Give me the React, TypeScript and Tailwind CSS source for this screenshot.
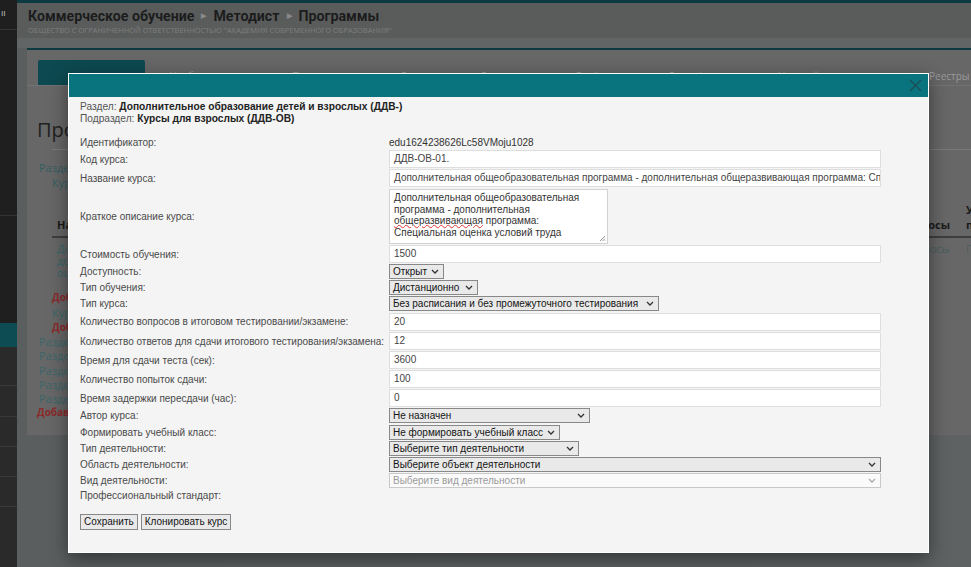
import React from "react";

function Chevron({ className = "" }: { className?: string }) {
  return (
    <svg width="8" height="5" viewBox="0 0 8 5" className={className}>
      <path d="M1 1l3 3 3-3" fill="none" stroke="currentColor" strokeWidth="1.3" />
    </svg>
  );
}

function Field({ value }: { value: string }) {
  return (
    <div className="h-[18px] w-[492px] overflow-hidden whitespace-nowrap border border-[#dedede] bg-white pl-[4px] text-[10px] leading-[16px] text-[#444]">
      {value}
    </div>
  );
}

function Select({ value, className, disabled }: { value: string; className: string; disabled?: boolean }) {
  return (
    <div
      className={`flex h-[15px] items-center justify-between border pl-[3px] pr-[4px] text-[10px] leading-none whitespace-nowrap ${
        disabled ? "border-[#c9c9c9] bg-[#fafafa] text-[#9b9b9b]" : "border-[#888] bg-[#e9e9e9] text-[#141414]"
      } ${className}`}
    >
      <span>{value}</span>
      <Chevron className={disabled ? "text-[#aaa]" : "text-[#333]"} />
    </div>
  );
}

function Label({ children }: { children: React.ReactNode }) {
  return <div className="text-[10px] leading-[13px] text-[#4a4a4a] whitespace-nowrap">{children}</div>;
}

function Btn({ children }: { children: React.ReactNode }) {
  return (
    <div className="flex h-[16px] items-center border border-[#888] bg-[#e9e9e9] px-[3px] text-[10px] leading-none text-[#141414]">
      {children}
    </div>
  );
}

function Background() {
  const tabs = [
    { t: "Учебные группы", w: "w-[122px]" },
    { t: "Программы", w: "w-[108px]" },
    { t: "Слушатели", w: "w-[80px]" },
    { t: "Документы", w: "w-[95px]" },
    { t: "Отчёты", w: "w-[93px]" },
    { t: "Сертификаты", w: "w-[110px]" },
    { t: "Настройки", w: "w-[151px]" },
  ];
  return (
    <div className="flex h-full">
      {/* sidebar */}
      <aside className="flex w-[17px] shrink-0 flex-col bg-[#1f1f1f]">
        <div className="h-[30px] border-b border-[#333] pl-[1px] pt-[8px] text-[9px] leading-none text-[#bbb]">ıı</div>
        <div className="h-[186px] border-b border-[#333]" />
        <div className="h-[107px]" />
        <div className="h-[24px] bg-[#0d4c53]" />
        <div className="h-[39px] border-b border-[#3a3a3a] bg-[#2a2a2a]" />
        <div className="h-[31px] border-b border-[#3a3a3a] bg-[#2a2a2a]" />
        <div className="h-[30px] border-b border-[#3a3a3a] bg-[#2a2a2a]" />
        <div className="h-[30px] border-b border-[#3a3a3a] bg-[#2a2a2a]" />
        <div className="h-[30px] border-b border-[#3a3a3a] bg-[#2a2a2a]" />
        <div className="flex-1 bg-[#2a2a2a]" />
      </aside>

      <main className="flex flex-1 flex-col bg-[#5a5e5e] font-['Open_Sans',Arial,sans-serif]">
        <div className="h-[3px] bg-[#0c3a40]" />
        <header className="h-[35px] bg-[#5a5c5c] pl-[11px] pt-[4px]">
          <div className="flex items-center gap-[7px] font-['Roboto',Arial,sans-serif] text-[14.2px] font-bold leading-[18px] text-[#1c1c1c]">
            <span>Коммерческое обучение</span>
            <span className="text-[7px] text-[#8a8a8a]">▶</span>
            <span>Методист</span>
            <span className="text-[7px] text-[#8a8a8a]">▶</span>
            <span>Программы</span>
          </div>
          <div className="mt-[2px] text-[7.5px] uppercase leading-none text-[#7c7e7e]">
            Общество с ограниченной ответственностью "Академия современного образования"
          </div>
        </header>
        <div className="h-[10px] bg-[#626565]" />

        <div className="pl-[10px]">
          <section className="flex h-[387px] flex-col border-t-2 border-[#0c3a40] bg-[#676767]">
            {/* tabs */}
            <div className="mt-[10px] flex h-[26px] items-end border-b border-[#727272]">
              <div className="ml-[11px] h-[25px] w-[107px] rounded-t-[2px] bg-[#0d4950]" />
              <div className="ml-[25px] flex self-center pt-[7px] text-[10px] text-[#9a9a9a]">
                {tabs.map((x) => (
                  <span key={x.t} className={`${x.w} shrink-0`}>
                    {x.t}
                  </span>
                ))}
                <span className="shrink-0">Реестры</span>
              </div>
            </div>

            <div className="ml-[10px] mt-[33px] text-[20px] leading-[22px] text-[#1f1f1f]">Программы</div>
            <div className="ml-[25px] mt-[8px] border-b border-[#7a7a7a]" />
            <div className="ml-[12px] mt-[10px] text-[11px] leading-[15px] text-[#335f63]">Раздел: Дополнительное образование</div>
            <div className="ml-[25px] text-[11px] leading-[15px] text-[#335f63]">Курсы для взрослых</div>

            {/* table */}
            <div className="ml-[25px] mt-[12px]">
              <div className="flex items-end border-b-2 border-[#3e3e3e] pb-[4px] text-[11px] font-bold leading-[15px] text-[#1a1a1a]">
                <div className="flex-1 pl-[5px]">Наименование</div>
                <div className="shrink-0">Вопросы</div>
                <div className="w-[21px] shrink-0 overflow-visible whitespace-nowrap pl-[16px]">
                  <div>Уровень</div>
                  <div>подготовки</div>
                </div>
              </div>
              <div className="flex pt-[5px] text-[11px] leading-[12px] text-[#3a6669]">
                <div className="flex-1 pl-[5px]">
                  <div>Дополнительная</div>
                  <div>дополнительная</div>
                  <div>оценка условий</div>
                </div>
                <div className="shrink-0 text-[#4a5e5e]">Вопросы</div>
                <div className="w-[21px] shrink-0 whitespace-nowrap pl-[16px] text-[#4a5e5e]">Просмотр</div>
              </div>
            </div>
            <div className="ml-[25px] mt-[11px] text-[10px] font-bold leading-[15px] text-[#8b2a2a]">Добавить программу</div>
            <div className="ml-[25px] text-[11px] leading-[15px] text-[#3a6669]">Курсы повышения</div>
            <div className="ml-[25px] text-[10px] font-bold leading-[15px] text-[#8b2a2a]">Добавить программу</div>
            <div className="ml-[12px] text-[11px] leading-[14.3px] text-[#3a6669]">
              <div>Раздел: Профессиональное обучение</div>
              <div>Раздел: Охрана труда</div>
              <div>Раздел: Пожарная безопасность</div>
              <div>Раздел: Промышленная безопасность</div>
              <div>Раздел: Электробезопасность</div>
            </div>
            <div className="ml-[10px] text-[10px] font-bold leading-[12px] text-[#8b2a2a]">Добавить раздел</div>
          </section>
        </div>
        <div className="flex-1 bg-gradient-to-r from-[#5a5e5e] to-[#5e6262]" />
      </main>
    </div>
  );
}

export default function App() {
  const desc = (
    <>
      Дополнительная общеобразовательная программа - дополнительная{" "}
      <span className="underline decoration-[#d33] decoration-wavy decoration-1 underline-offset-0">общеразвивающая</span>{" "}
      программа: Специальная оценка условий труда
    </>
  );

  return (
    <div className="relative h-[567px] w-[971px] overflow-hidden bg-[#5a5e5e]">
      <Background />

      {/* modal */}
      <div className="absolute left-[68px] top-[73px] flex h-[480px] w-[861px] flex-col border border-white bg-[#f4f4f4] shadow-[0_6px_18px_rgba(0,0,0,0.45)] font-['Liberation_Sans',Arial,sans-serif]">
        <div className="flex h-[23px] shrink-0 items-center justify-end bg-[#09737e] pr-[6px]">
          <svg width="13" height="13" viewBox="0 0 13 13">
            <path d="M1 1l11 11M12 1L1 12" stroke="#1c4c54" strokeWidth="1.3" fill="none" />
          </svg>
        </div>

        <div className="pl-[11px] pt-[4px]">
          <div className="text-[10.2px] leading-[11.5px] text-[#555]">
            <div>
              Раздел: <b className="text-[#222]">Дополнительное образование детей и взрослых (ДДВ-)</b>
            </div>
            <div>
              Подраздел: <b className="text-[#222]">Курсы для взрослых (ДДВ-ОВ)</b>
            </div>
          </div>

          <div className="mt-[12px] grid grid-cols-[309px_492px] items-center gap-y-px">
            <div className="h-[13px]"><Label>Идентификатор:</Label></div>
            <div className="h-[13px] text-[10px] leading-[13px] text-[#333]">edu1624238626Lc58VMoju1028</div>

            <Label>Код курса:</Label>
            <Field value="ДДВ-ОВ-01." />

            <Label>Название курса:</Label>
            <Field value="Дополнительная общеобразовательная программа - дополнительная общеразвивающая программа: Специальная оценка условий труда" />

            <Label>Краткое описание курса:</Label>
            <div className="relative mt-px h-[55px] w-[219px] border border-[#d2d2d2] bg-white pl-[4px] pr-[18px] pt-[2px] text-[10px] leading-[11.7px] text-[#333]">
              {desc}
              <svg width="8" height="8" viewBox="0 0 8 8" className="absolute bottom-[1px] right-[1px]">
                <path d="M7 2L2 7M7 4.5L4.5 7M7 6.5L6.5 7" stroke="#888" strokeWidth="0.9" fill="none" />
              </svg>
            </div>

            <Label>Стоимость обучения:</Label>
            <Field value="1500" />

            <Label>Доступность:</Label>
            <Select value="Открыт" className="w-[55px]" />

            <Label>Тип обучения:</Label>
            <Select value="Дистанционно" className="w-[89px]" />

            <Label>Тип курса:</Label>
            <Select value="Без расписания и без промежуточного тестирования" className="w-[270px]" />

            <Label>Количество вопросов в итоговом тестировании/экзамене:</Label>
            <div className="pt-px"><Field value="20" /></div>

            <Label>Количество ответов для сдачи итогового тестирования/экзамена:</Label>
            <Field value="12" />

            <Label>Время для сдачи теста (сек):</Label>
            <Field value="3600" />

            <Label>Количество попыток сдачи:</Label>
            <Field value="100" />

            <Label>Время задержки пересдачи (час):</Label>
            <Field value="0" />

            <Label>Автор курса:</Label>
            <Select value="Не назначен" className="w-[201px]" />

            <Label>Формировать учебный класс:</Label>
            <div className="pt-px"><Select value="Не формировать учебный класс" className="w-[171px]" /></div>

            <Label>Тип деятельности:</Label>
            <Select value="Выберите тип деятельности" className="w-[190px]" />

            <Label>Область деятельности:</Label>
            <Select value="Выберите объект деятельности" className="w-[492px]" />

            <Label>Вид деятельности:</Label>
            <Select value="Выберите вид деятельности" className="w-[492px]" disabled />

            <Label>Профессиональный стандарт:</Label>
            <div className="h-[13px]" />
          </div>

          <div className="mt-[12px] flex gap-[3px]">
            <Btn>Сохранить</Btn>
            <Btn>Клонировать курс</Btn>
          </div>
        </div>
      </div>
    </div>
  );
}
